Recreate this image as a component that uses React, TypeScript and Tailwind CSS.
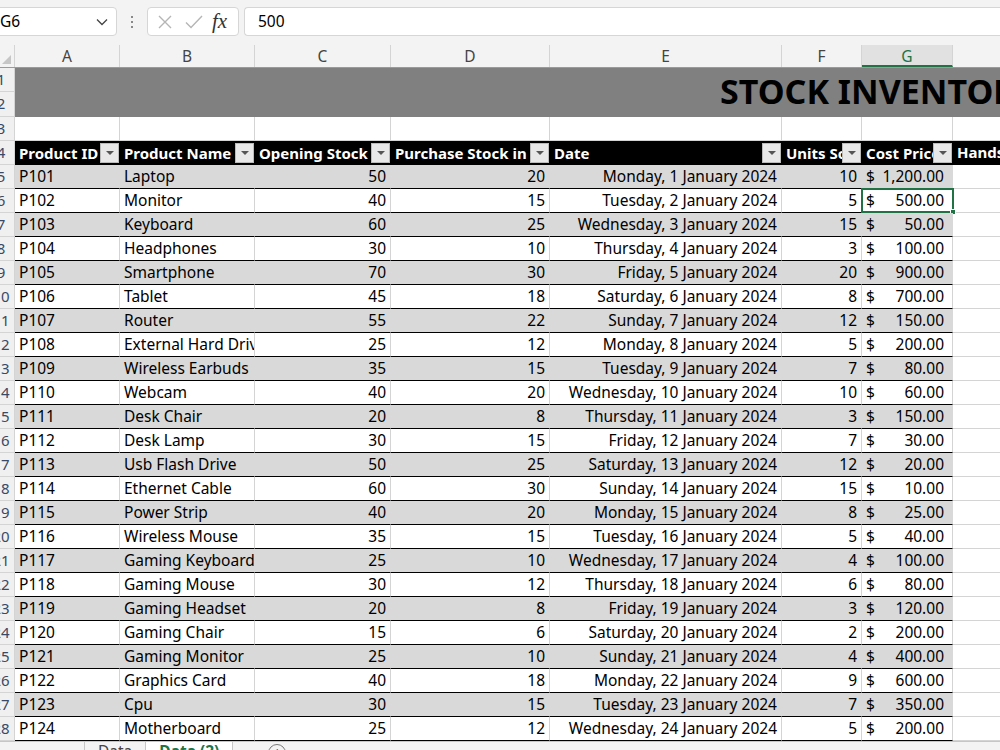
import React from "react";

const font = { fontFamily: '"Noto Sans", "Liberation Sans", sans-serif' };

const colWidths = ["w-[105px]", "w-[135px]", "w-[136px]", "w-[159px]", "w-[232px]", "w-[80px]", "w-[91px]"];
const letters = ["A", "B", "C", "D", "E", "F", "G"];

type Item = [string, string, number, number, string, number, string];

const days = ["Monday", "Tuesday", "Wednesday", "Thursday", "Friday", "Saturday", "Sunday"];

const items: Item[] = [
  ["P101", "Laptop", 50, 20, "", 10, "1,200.00"],
  ["P102", "Monitor", 40, 15, "", 5, "500.00"],
  ["P103", "Keyboard", 60, 25, "", 15, "50.00"],
  ["P104", "Headphones", 30, 10, "", 3, "100.00"],
  ["P105", "Smartphone", 70, 30, "", 20, "900.00"],
  ["P106", "Tablet", 45, 18, "", 8, "700.00"],
  ["P107", "Router", 55, 22, "", 12, "150.00"],
  ["P108", "External Hard Drive", 25, 12, "", 5, "200.00"],
  ["P109", "Wireless Earbuds", 35, 15, "", 7, "80.00"],
  ["P110", "Webcam", 40, 20, "", 10, "60.00"],
  ["P111", "Desk Chair", 20, 8, "", 3, "150.00"],
  ["P112", "Desk Lamp", 30, 15, "", 7, "30.00"],
  ["P113", "Usb Flash Drive", 50, 25, "", 12, "20.00"],
  ["P114", "Ethernet Cable", 60, 30, "", 15, "10.00"],
  ["P115", "Power Strip", 40, 20, "", 8, "25.00"],
  ["P116", "Wireless Mouse", 35, 15, "", 5, "40.00"],
  ["P117", "Gaming Keyboard", 25, 10, "", 4, "100.00"],
  ["P118", "Gaming Mouse", 30, 12, "", 6, "80.00"],
  ["P119", "Gaming Headset", 20, 8, "", 3, "120.00"],
  ["P120", "Gaming Chair", 15, 6, "", 2, "200.00"],
  ["P121", "Gaming Monitor", 25, 10, "", 4, "400.00"],
  ["P122", "Graphics Card", 40, 18, "", 9, "600.00"],
  ["P123", "Cpu", 30, 15, "", 7, "350.00"],
  ["P124", "Motherboard", 25, 12, "", 5, "200.00"],
].map((row, i) => {
  const r = row as Item;
  r[4] = `${days[i % 7]}, ${i + 1} January 2024`;
  return r;
});

const headers = ["Product ID", "Product Name", "Opening Stock", "Purchase Stock in", "Date", "Units Sold", "Cost Price"];

// row numbers sit in a header column that is scrolled partly out of view
function RowHead({ n, h = "h-[24px]" }: { n: number; h?: string }) {
  return (
    <div className={`${h} w-[15px] shrink-0 overflow-hidden border-r border-b border-[#d4d4d4] bg-[#f0f0f0]`}>
      <div className="-ml-[19px] w-[40px] text-center text-[15px] leading-[23px] text-[#3a4a66]">{n}</div>
    </div>
  );
}

function FilterButton() {
  return (
    <div className="flex h-[20px] w-[19px] shrink-0 items-center justify-center border border-[#bbb] bg-[#e8e8e8]">
      <div className="h-0 w-0 border-x-[4px] border-t-[4px] border-x-transparent border-t-[#555]" />
    </div>
  );
}

function DataRow({ n, item, shaded, selected }: { n: number; item: Item; shaded: boolean; selected: boolean }) {
  const bg = shaded ? "bg-[#d9d9d9]" : "bg-white";
  const line = shaded ? "border-r-[#d9d9d9]" : "border-r-[#d4d4d4]";
  const cell = `h-[24px] shrink-0 border-r border-b border-b-black ${line} ${bg} overflow-hidden whitespace-nowrap px-[4px] leading-[23px]`;
  return (
    <div className="flex">
      <RowHead n={n} />
      <div className={`${cell} ${colWidths[0]}`}>{item[0]}</div>
      <div className={`${cell} ${colWidths[1]}`}>{item[1]}</div>
      <div className={`${cell} ${colWidths[2]} text-right`}>{item[2]}</div>
      <div className={`${cell} ${colWidths[3]} text-right`}>{item[3]}</div>
      <div className={`${cell} ${colWidths[4]} text-right`}>{item[4]}</div>
      <div className={`${cell} ${colWidths[5]} text-right`}>{item[5]}</div>
      <div className={`${cell} ${colWidths[6]} relative flex justify-between overflow-visible pr-[8px]`}>
        <span>$</span>
        <span>{item[6]}</span>
        {selected && (
          <div className="absolute -left-px -top-px h-[25px] w-[93px] border-2 border-[#217346]">
            <div className="absolute -bottom-[4px] -right-[4px] h-[6px] w-[6px] border border-white bg-[#217346]" />
          </div>
        )}
      </div>
      <div className="h-[24px] flex-1 border-b border-[#d4d4d4] bg-white" />
    </div>
  );
}

export default function App() {
  return (
    <div className="h-[750px] w-[1000px] overflow-hidden bg-[#f3f3f3] text-[15.5px] text-black" style={font}>
      {/* formula bar */}
      <div className="flex h-[45px] items-start gap-[5px] pt-[7px]">
        <div className="-ml-[10px] flex h-[29px] w-[127px] items-center justify-between rounded-[4px] border border-[#d6d6d6] bg-white pl-[9px] pr-[8px]">
          <span>G6</span>
          <svg width="12" height="8" viewBox="0 0 12 8" fill="none" stroke="#444" strokeWidth="1.3">
            <path d="M1 1.5l5 5 5-5" />
          </svg>
        </div>
        <div className="flex h-[29px] w-[20px] flex-col items-center justify-center gap-[3px]">
          <div className="h-[2px] w-[2px] bg-[#888]" />
          <div className="h-[2px] w-[2px] bg-[#888]" />
          <div className="h-[2px] w-[2px] bg-[#888]" />
        </div>
        <div className="flex h-[29px] w-[92px] items-center rounded-[4px] border border-[#d6d6d6] bg-white pl-[9px]">
          <svg width="16" height="16" viewBox="0 0 16 16" fill="none" stroke="#b5b5b5" strokeWidth="1.4">
            <path d="M2 2l12 12M14 2L2 14" />
          </svg>
          <svg className="ml-[12px]" width="18" height="16" viewBox="0 0 18 16" fill="none" stroke="#b5b5b5" strokeWidth="1.4">
            <path d="M1 8.5l5 5L17 2" />
          </svg>
          <span className="ml-[9px] text-[21px] italic leading-none text-[#333]" style={{ fontFamily: '"Liberation Serif", serif' }}>
            fx
          </span>
        </div>
        <div className="flex h-[29px] flex-1 items-center rounded-l-[4px] border border-r-0 border-[#d6d6d6] bg-white pl-[13px]">500</div>
      </div>

      {/* column headers */}
      <div className="flex h-[23px] border-b border-[#9a9a9a]">
        <div className="relative h-full w-[15px] shrink-0 border-r border-[#d4d4d4]">
          <div className="absolute bottom-[3px] right-[3px] h-0 w-0 border-l-[9px] border-t-[9px] border-l-transparent border-t-transparent border-b-0 border-r-[9px] border-r-[#c6c6c6]" />
        </div>
        {letters.map((l, i) => (
          <div
            key={l}
            className={`${colWidths[i]} shrink-0 border-r border-[#d4d4d4] text-center leading-[22px] ${l === "G" ? "border-b-2 border-b-[#217346] bg-[#e1e1e1] text-[#217346]" : "text-[#444]"}`}
          >
            {l}
          </div>
        ))}
        <div className="flex-1" />
      </div>

      {/* title rows 1-2 */}
      <div className="flex">
        <div className="flex flex-col">
          <RowHead n={1} />
          <RowHead n={2} h="h-[25px]" />
        </div>
        <div className="flex h-[49px] flex-1 items-center overflow-hidden whitespace-nowrap bg-[#808080] pb-[3px] pl-[705px] text-[34px] font-bold leading-none">
          STOCK INVENTORY
        </div>
      </div>

      {/* row 3 */}
      <div className="flex">
        <RowHead n={3} />
        {colWidths.map((w, i) => (
          <div key={i} className={`${w} h-[24px] shrink-0 border-r border-b border-[#d4d4d4] bg-white`} />
        ))}
        <div className="h-[24px] flex-1 border-b border-[#d4d4d4] bg-white" />
      </div>

      {/* header row 4 */}
      <div className="flex">
        <RowHead n={4} />
        {headers.map((h, i) => (
          <div key={h} className={`${colWidths[i]} flex h-[24px] shrink-0 items-center bg-black pl-[4px] pr-[1px] text-[15px] font-bold text-white`}>
            <span className="flex-1 overflow-hidden whitespace-nowrap leading-[23px]">{h}</span>
            <FilterButton />
          </div>
        ))}
        <div className="h-[24px] flex-1 overflow-hidden whitespace-nowrap bg-black pl-[4px] text-[15px] font-bold leading-[23px] text-white">Handset Stock</div>
      </div>

      {items.map((item, i) => (
        <DataRow key={item[0]} n={i + 5} item={item} shaded={i % 2 === 0} selected={i === 1} />
      ))}

      {/* sheet tabs */}
      <div className="flex h-[30px] items-start border-t border-[#c6c6c6] bg-[#f3f3f3] text-[#444]">
        <div className="flex w-[84px] items-center gap-[18px] pl-[8px] pt-[4px] text-[10px] text-[#999]">
          <span>◀</span>
          <span>▶</span>
        </div>
        <div className="h-[24px] border-l border-[#c6c6c6] px-[13px] leading-[18px]">Data</div>
        <div className="h-[24px] border-x border-[#c6c6c6] bg-white px-[13px] font-bold leading-[18px] text-[#217346]">Data (2)</div>
        <div className="ml-[35px] mt-[2px] flex h-[18px] w-[18px] items-center justify-center rounded-full border border-[#777] text-[14px] leading-none text-[#555]">
          +
        </div>
      </div>
    </div>
  );
}
